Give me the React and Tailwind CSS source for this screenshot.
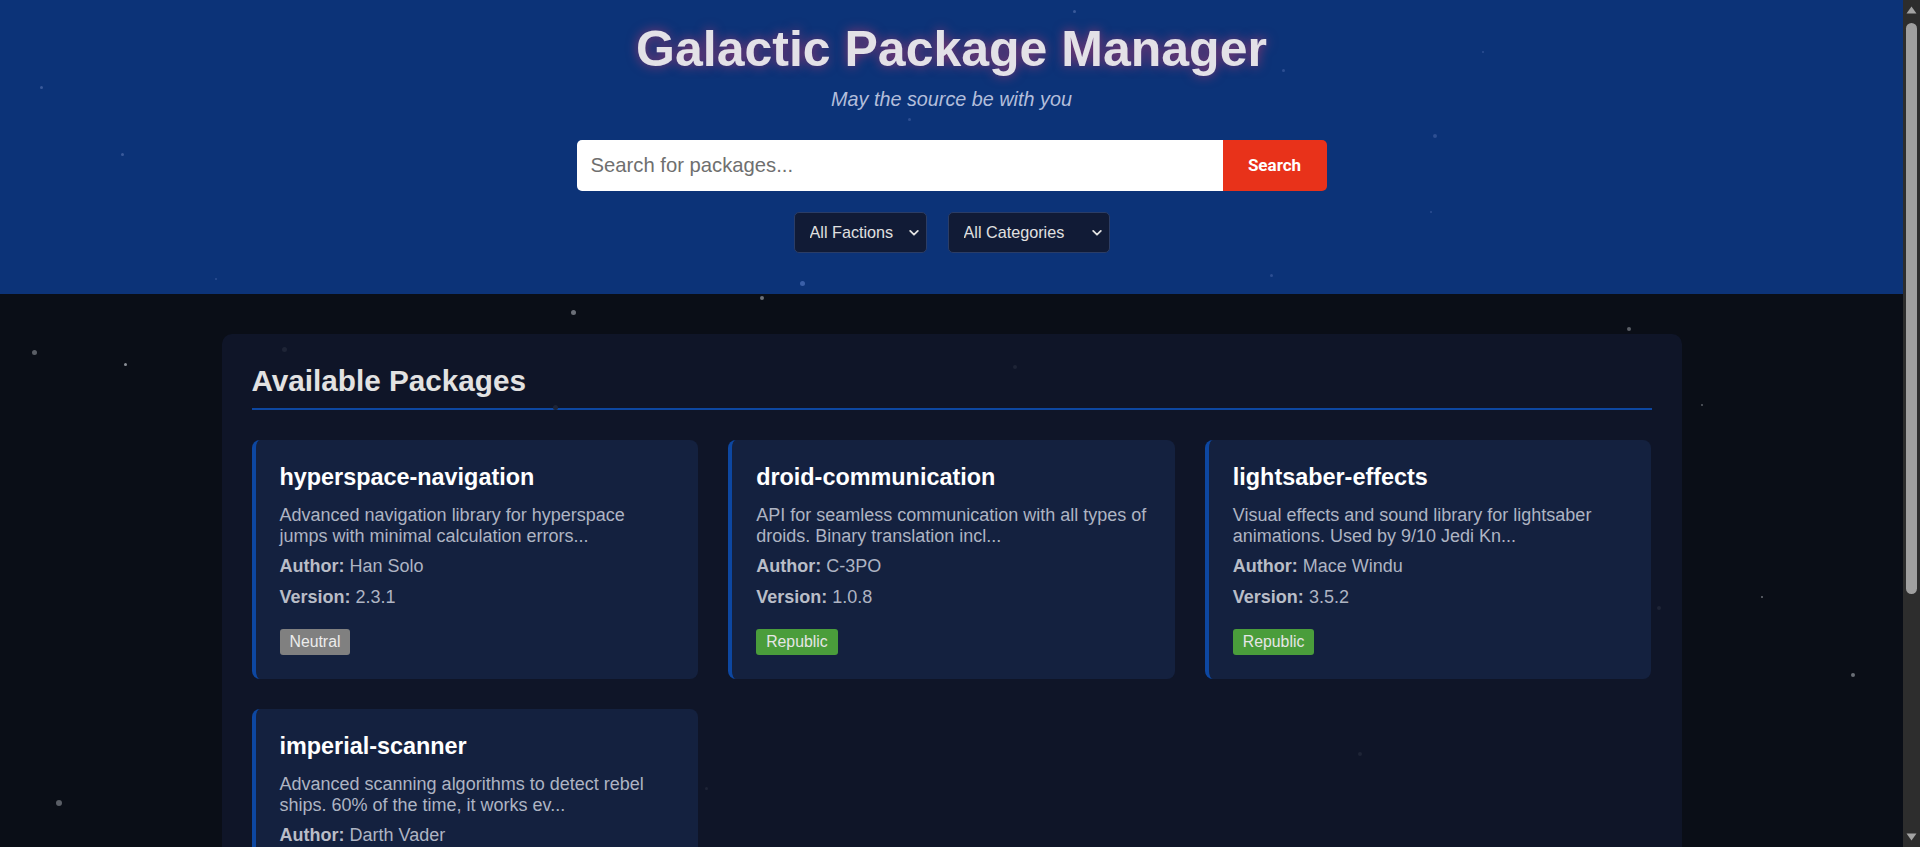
import { useState } from "react";

const PACKAGES = [
  {
    name: "hyperspace-navigation",
    description: "Advanced navigation library for hyperspace jumps with minimal calculation errors...",
    author: "Han Solo",
    version: "2.3.1",
    faction: "Neutral",
  },
  {
    name: "droid-communication",
    description: "API for seamless communication with all types of droids. Binary translation incl...",
    author: "C-3PO",
    version: "1.0.8",
    faction: "Republic",
  },
  {
    name: "lightsaber-effects",
    description: "Visual effects and sound library for lightsaber animations. Used by 9/10 Jedi Kn...",
    author: "Mace Windu",
    version: "3.5.2",
    faction: "Republic",
  },
  {
    name: "imperial-scanner",
    description: "Advanced scanning algorithms to detect rebel ships. 60% of the time, it works ev...",
    author: "Darth Vader",
    version: "4.1.0",
    faction: "Empire",
  },
];

const FACTION_STYLES = {
  Neutral: "bg-[#808080] text-[#ececec]",
  Republic: "bg-[#4a9d3b] text-[#e6e6e6]",
  Empire: "bg-[#b3261e] text-[#ececec]",
};

// background stars: [x, y, size, color]
const STARS = [
  [1073, 10, 3, "bg-[#3a5a9a]"],
  [40, 86, 3, "bg-[#3a5a9a]"],
  [121, 153, 3, "bg-[#3a5a9a]"],
  [908, 118, 3, "bg-[#2d4f92]"],
  [1282, 69, 3, "bg-[#2d4f92]"],
  [1433, 134, 4, "bg-[#2d4f92]"],
  [1430, 211, 2, "bg-[#2d4f92]"],
  [1482, 51, 2, "bg-[#2d4f92]"],
  [1270, 274, 3, "bg-[#2d4f92]"],
  [800, 281, 5, "bg-[#3a5fa8]"],
  [215, 278, 2, "bg-[#2d4f92]"],
  [760, 296, 4, "bg-[#6b6f78]"],
  [571, 310, 5, "bg-[#6b6f78]"],
  [32, 350, 5, "bg-[#5a5e66]"],
  [124, 363, 3, "bg-[#8a8e96]"],
  [1627, 327, 4, "bg-[#5a5e66]"],
  [1701, 404, 2, "bg-[#5a5e66]"],
  [1761, 596, 2, "bg-[#6a6e76]"],
  [1851, 673, 4, "bg-[#6a6e76]"],
  [56, 800, 6, "bg-[#5a5e66]"],
  [282, 347, 5, "bg-[#1e2436]"],
  [553, 405, 5, "bg-[#1e2436]"],
  [1013, 365, 4, "bg-[#1e2436]"],
  [1358, 752, 4, "bg-[#1e2436]"],
  [1657, 606, 4, "bg-[#1e2436]"],
  [705, 787, 3, "bg-[#1e2436]"],
];

function Chevron() {
  return (
    <svg className="pointer-events-none absolute right-[8px] top-1/2 -translate-y-1/2" width="10" height="7" viewBox="0 0 10 7" fill="none">
      <path d="M1.2 1.4 L5 5.2 L8.8 1.4" stroke="#e2e2e2" strokeWidth="1.8" strokeLinecap="round" strokeLinejoin="round" />
    </svg>
  );
}

function Scrollbar() {
  return (
    <div className="fixed right-0 top-0 z-20 flex h-screen w-[17px] flex-col items-center bg-[#2d2d2d]">
      <svg className="mt-[6px]" width="11" height="8" viewBox="0 0 11 8">
        <path d="M5.5 0.5 L10.5 7.5 L0.5 7.5 Z" fill="#a3a3a3" />
      </svg>
      <div className="mt-[9px] h-[571px] w-[11px] rounded-full bg-[#9f9f9f]" />
      <div className="flex-1" />
      <svg className="mb-[6px]" width="11" height="8" viewBox="0 0 11 8">
        <path d="M0.5 0.5 L10.5 0.5 L5.5 7.5 Z" fill="#a3a3a3" />
      </svg>
    </div>
  );
}

function PackageCard({ pkg }) {
  return (
    <div className="rounded-[8px] border-l-4 border-[#0d47a1] bg-[#14213f] p-[24px]">
      <h3 className="mb-[15px] text-[23.4px] font-bold leading-[26px] text-white">{pkg.name}</h3>
      <p className="mb-[10px] text-[18px] leading-[20.7px] text-[#aeb4c3]">{pkg.description}</p>
      <p className="mb-[10px] text-[18px] leading-[20.7px] text-[#aeb4c3]">
        <strong className="font-bold text-[#b9bdc7]">Author:</strong> {pkg.author}
      </p>
      <p className="mb-[21px] text-[18px] leading-[20.7px] text-[#aeb4c3]">
        <strong className="font-bold text-[#b9bdc7]">Version:</strong> {pkg.version}
      </p>
      <span className={"inline-flex h-[26px] items-center rounded-[3px] px-[10px] text-[15.8px] " + FACTION_STYLES[pkg.faction]}>
        {pkg.faction}
      </span>
    </div>
  );
}

export default function App() {
  const [query, setQuery] = useState("");
  const [faction, setFaction] = useState("all");
  const [category, setCategory] = useState("all");

  return (
    <div className="relative min-h-screen bg-[#0a0e17] font-['Liberation_Sans',Arial,sans-serif]">
      <div className="w-[calc(100%-17px)] pb-[210px]">
        <header className="bg-[#0c3378] pb-[41px] pt-[21px] text-center">
          <h1 className="text-[50px] font-bold leading-[56px] text-[#e3e1e7] [text-shadow:0_0_12px_rgba(255,60,110,0.55)]">
            Galactic Package Manager
          </h1>
          <p className="mt-[11px] text-[19.8px] italic leading-[22px] text-[#b3bedb]">May the source be with you</p>

          <div className="mx-auto mt-[30px] flex h-[51px] w-[750px]">
            <input
              value={query}
              onChange={(e) => setQuery(e.target.value)}
              placeholder="Search for packages..."
              className="min-w-0 flex-1 rounded-l-[5px] bg-white px-[14px] text-[20.25px] text-[#333] outline-none placeholder:text-[#6f6f6f]"
            />
            <button className="w-[104px] rounded-r-[5px] bg-[#e8321a] font-['Roboto',sans-serif] text-[17px] font-bold text-white">
              Search
            </button>
          </div>

          <div className="mt-[21px] flex justify-center gap-[21px]">
            <div className="relative">
              <select
                value={faction}
                onChange={(e) => setFaction(e.target.value)}
                className="h-[41px] w-[133px] appearance-none rounded-[5px] border border-[#2b3d66] bg-[#111b36] pl-[15px] text-left text-[16.2px] text-[#e0e0e0] outline-none"
              >
                <option value="all">All Factions</option>
                <option value="republic">Republic</option>
                <option value="empire">Empire</option>
                <option value="neutral">Neutral</option>
              </select>
              <Chevron />
            </div>
            <div className="relative">
              <select
                value={category}
                onChange={(e) => setCategory(e.target.value)}
                className="h-[41px] w-[162px] appearance-none rounded-[5px] border border-[#2b3d66] bg-[#111b36] pl-[15px] text-left text-[16.2px] text-[#e0e0e0] outline-none"
              >
                <option value="all">All Categories</option>
                <option value="navigation">Navigation</option>
                <option value="communication">Communication</option>
                <option value="effects">Effects</option>
              </select>
              <Chevron />
            </div>
          </div>
        </header>

        <main className="mx-auto mt-[40px] max-w-[1460px] rounded-[10px] bg-[#0f1528] p-[30px]">
          <h2 className="mb-[30px] border-b-2 border-[#0d47a1] pb-[11px] text-[29.7px] font-bold leading-[33px] text-[#e2e2e2]">
            Available Packages
          </h2>
          <div className="grid grid-cols-3 gap-[30px]">
            {PACKAGES.map((p) => (
              <PackageCard key={p.name} pkg={p} />
            ))}
          </div>
        </main>
      </div>

      {/* stars */}
      <div className="pointer-events-none absolute inset-0 overflow-hidden">
        {STARS.map(([x, y, s, c], i) => (
          <span
            key={i}
            className={"absolute rounded-full " + c}
            style={{ left: x, top: y, width: s, height: s }}
          />
        ))}
      </div>

      <Scrollbar />
    </div>
  );
}
